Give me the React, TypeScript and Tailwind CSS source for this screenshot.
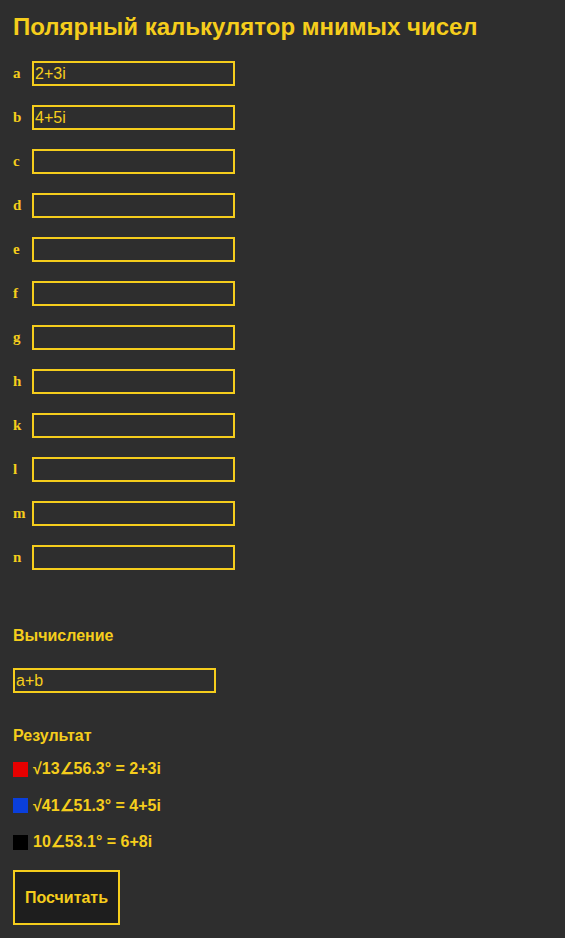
import { useState } from 'react'

const letters = ['a', 'b', 'c', 'd', 'e', 'f', 'g', 'h', 'k', 'l', 'm', 'n']

const results = [
    { color: 'bg-[#e60000]', text: '√13∠56.3° = 2+3i' },
    { color: 'bg-[#0a3fdc]', text: '√41∠51.3° = 4+5i' },
    { color: 'bg-black', text: '10∠53.1° = 6+8i' },
]

export default function App() {
    const [values, setValues] = useState<Record<string, string>>({ a: '2+3i', b: '4+5i' })
    const [expr, setExpr] = useState('a+b')

    return (
        <div className="min-h-[938px] bg-[#2e2e2e] px-[13px] pt-[13px] text-[#f5cd1c] font-['Liberation_Sans',Arial,sans-serif]">
            <h1 className="text-[24px] font-bold leading-[28px]">Полярный калькулятор мнимых чисел</h1>

            <div className="mt-[20px] flex flex-col gap-[19px]">
                {letters.map((l) => (
                    <div key={l} className="flex items-center">
                        <label className="w-[19px] font-['Liberation_Serif',serif] text-[15px] font-bold">{l}</label>
                        <input
                            value={values[l] ?? ''}
                            onChange={(e) => setValues({ ...values, [l]: e.target.value })}
                            className="h-[25px] w-[203px] border-2 border-[#f5cd1c] bg-transparent px-[1px] text-[16px] text-[#f5cd1c] outline-none"
                        />
                    </div>
                ))}
            </div>

            <h3 className="mt-[57px] text-[16px] font-bold leading-[18px]">Вычисление</h3>
            <input
                value={expr}
                onChange={(e) => setExpr(e.target.value)}
                className="mt-[23px] block h-[25px] w-[203px] border-2 border-[#f5cd1c] bg-transparent px-[1px] text-[16px] text-[#f5cd1c] outline-none"
            />

            <h3 className="mt-[34px] text-[16px] font-bold leading-[18px]">Результат</h3>
            <div className="mt-[15px] flex flex-col gap-[18.5px]">
                {results.map((r) => (
                    <div key={r.text} className="flex items-center gap-[5px] text-[16px] font-bold leading-[18px]">
                        <span className={`inline-block h-[15px] w-[15px] ${r.color}`} />
                        <span>{r.text}</span>
                    </div>
                ))}
            </div>

            <button className="mt-[19px] h-[55px] w-[107px] border-2 border-[#f5cd1c] bg-[#1e1e1e] text-[16px] font-bold text-[#f5cd1c]">
                Посчитать
            </button>
        </div>
    )
}
